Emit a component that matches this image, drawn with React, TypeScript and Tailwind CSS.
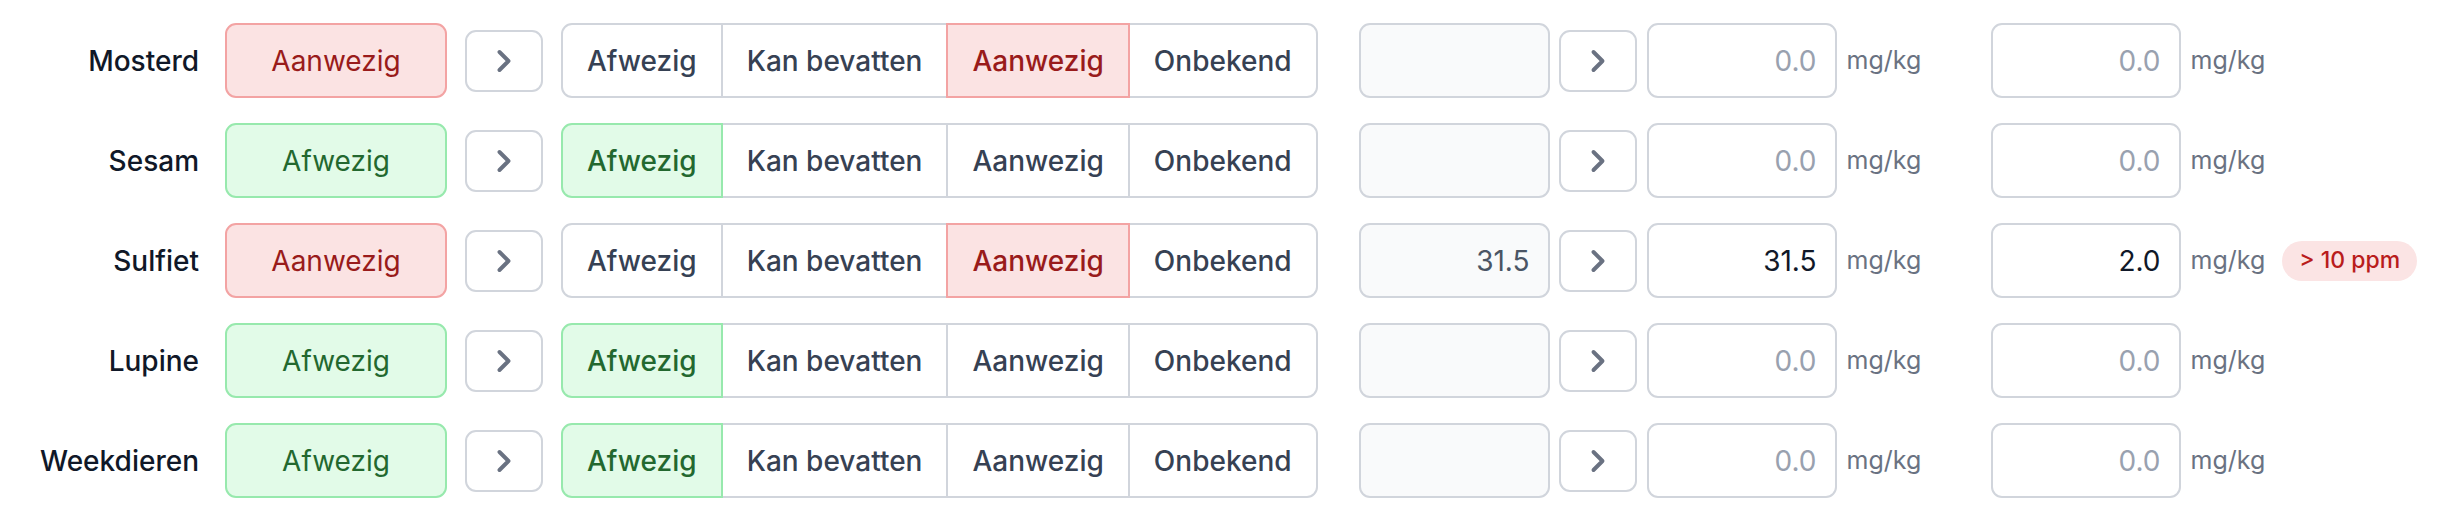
import { ChevronRight } from "lucide-react";

type Status = "Afwezig" | "Kan bevatten" | "Aanwezig" | "Onbekend";

interface Row {
  name: string;
  status: Status;
  current: string;
  value: string;
  limit: string;
  warn?: boolean;
}

const rows: Row[] = [
  { name: "Mosterd", status: "Aanwezig", current: "", value: "", limit: "" },
  { name: "Sesam", status: "Afwezig", current: "", value: "", limit: "" },
  { name: "Sulfiet", status: "Aanwezig", current: "31.5", value: "31.5", limit: "2.0", warn: true },
  { name: "Lupine", status: "Afwezig", current: "", value: "", limit: "" },
  { name: "Weekdieren", status: "Afwezig", current: "", value: "", limit: "" },
];

const options: Status[] = ["Afwezig", "Kan bevatten", "Aanwezig", "Onbekend"];

function statusBox(status: Status) {
  if (status === "Aanwezig") return "bg-[#fbe3e3] border-[#f3a3a3] text-[#991b1b]";
  if (status === "Afwezig") return "bg-[#e2fbe8] border-[#97e9ad] text-[#23682f]";
  return "bg-white border-gray-300 text-gray-700";
}

function ArrowButton() {
  return (
    <button
      type="button"
      className="w-[78px] h-[62px] shrink-0 rounded-[11px] border-2 border-gray-300 bg-white flex items-center justify-center text-gray-500"
    >
      <ChevronRight size={36} strokeWidth={2.6} />
    </button>
  );
}

function Segmented({ value }: { value: Status }) {
  return (
    <div className="flex h-[75px]">
      {options.map((opt, i) => {
        const active = opt === value;
        return (
          <button
            key={opt}
            type="button"
            className={
              "h-full px-[24px] border-2 font-medium flex items-center " +
              (i > 0 ? "-ml-[2px] " : "") +
              (i === 0 ? "rounded-l-[11px] " : "") +
              (i === options.length - 1 ? "rounded-r-[11px] " : "") +
              (active ? "relative z-10 " + statusBox(opt) : "bg-white border-gray-300 text-gray-700")
            }
          >
            {opt}
          </button>
        );
      })}
    </div>
  );
}

function NumberInput({ value }: { value: string }) {
  return (
    <input
      type="text"
      readOnly
      value={value}
      placeholder="0.0"
      className="w-[190px] h-[75px] shrink-0 rounded-[11px] border-2 border-gray-300 bg-white pr-[18px] text-right text-gray-900 placeholder:text-gray-400 outline-none"
    />
  );
}

export default function App() {
  return (
    <div
      className="bg-white w-full h-[520px] pt-[23px] flex flex-col gap-[25px] text-[28px]"
      style={{ fontFamily: "Inter, 'Noto Sans', sans-serif" }}
    >
      {rows.map((row) => (
        <div key={row.name} className="flex items-center h-[75px]">
          <span className="w-[199px] shrink-0 text-right font-medium text-gray-900">{row.name}</span>
          <div
            className={
              "ml-[26px] w-[222px] h-[75px] shrink-0 rounded-[11px] border-2 flex items-center justify-center " +
              statusBox(row.status)
            }
          >
            {row.status}
          </div>
          <div className="ml-[18px]">
            <ArrowButton />
          </div>
          <div className="ml-[18px]">
            <Segmented value={row.status} />
          </div>
          <div className="ml-[41px] w-[191px] h-[75px] shrink-0 rounded-[11px] border-2 border-gray-300 bg-gray-50 flex items-center justify-end pr-[18px] text-gray-600">
            {row.current}
          </div>
          <div className="ml-[9px]">
            <ArrowButton />
          </div>
          <div className="ml-[10px] flex items-center">
            <NumberInput value={row.value} />
            <span className="ml-[10px] w-[144px] text-[25px] text-gray-500">mg/kg</span>
          </div>
          <div className="flex items-center">
            <NumberInput value={row.limit} />
            <span className="ml-[10px] text-[25px] text-gray-500">mg/kg</span>
            {row.warn && (
              <span className="ml-[17px] h-[40px] px-[17px] rounded-full bg-[#fbe4e4] text-[#b91c1c] text-[23px] font-medium flex items-center">
                &gt; 10 ppm
              </span>
            )}
          </div>
        </div>
      ))}
    </div>
  );
}
